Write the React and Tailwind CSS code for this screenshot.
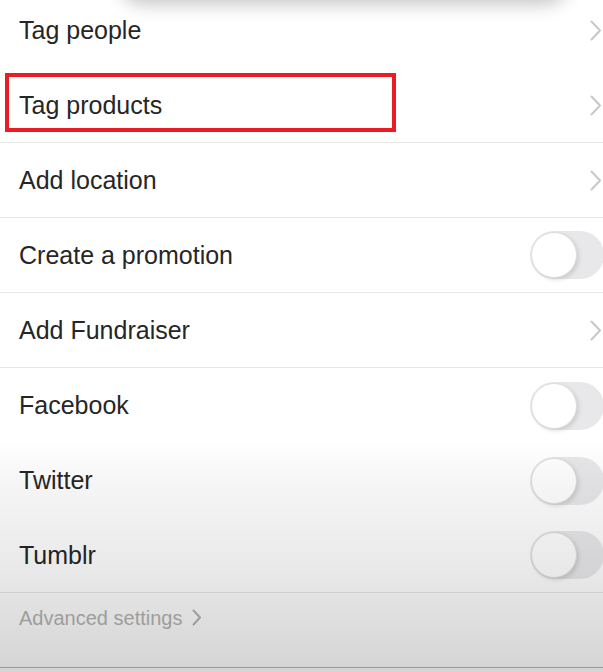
import React from "react";

const rows = [
  { label: "Tag people", kind: "link", first: true, noBorder: true },
  { label: "Tag products", kind: "link", marked: true },
  { label: "Add location", kind: "link" },
  { label: "Create a promotion", kind: "toggle" },
  { label: "Add Fundraiser", kind: "link" },
  { label: "Facebook", kind: "toggle", noBorder: true },
  { label: "Twitter", kind: "toggle", noBorder: true },
  { label: "Tumblr", kind: "toggle" },
];

function Chevron({ className }) {
  return (
    <svg width="12" height="21" viewBox="0 0 12 21" fill="none" className={className}>
      <path d="M1.5 1.5 L10 10.5 L1.5 19.5" stroke="#c8c8cc" strokeWidth="2" strokeLinecap="round" strokeLinejoin="round" />
    </svg>
  );
}

function Toggle() {
  return (
    <div className="w-[74px] h-[48px] -mr-[1px] rounded-full bg-[#e8e8ea] p-[1px] flex items-center">
      <div className="w-[46px] h-[46px] rounded-full bg-white border border-[#dedede] shadow-[2px_2px_4px_rgba(0,0,0,0.12)]" />
    </div>
  );
}

function Row({ label, kind, first, noBorder, marked }) {
  return (
    <div
      className={`relative flex items-center justify-between pl-[19px] h-[75px] ${
        first ? "-mt-[7px]" : ""
      } ${noBorder ? "" : "border-b border-[#e6e6e6]"}`}
    >
      {marked && (
        <div className="absolute left-[5px] top-[5px] w-[391px] h-[59px] border-[4px] border-[#ec1c24]" />
      )}
      <span className="text-[25px] text-[#262626] leading-none">{label}</span>
      {kind === "link" ? <Chevron className="mr-[1px]" /> : <Toggle />}
    </div>
  );
}

export default function App() {
  return (
    <div
      className="relative w-[603px] h-[672px] overflow-hidden bg-white"
      style={{ fontFamily: '"Liberation Sans", Arial, sans-serif' }}
    >
      {/* shadow of the sheet handle above the list */}
      <div className="absolute left-[120px] right-[35px] -top-[46px] h-[46px] rounded-full bg-white shadow-[0_4px_18px_rgba(0,0,0,0.24)]" />

      <div className="flex flex-col">
        {rows.map((r) => (
          <Row key={r.label} {...r} />
        ))}
        <div className="h-[49px] flex items-center pl-[19px] gap-[10px]">
          <span className="text-[20px] text-[#b4b4b4] leading-none">Advanced settings</span>
          <svg width="10" height="17" viewBox="0 0 10 17" fill="none">
            <path d="M1.5 1.5 L8 8.5 L1.5 15.5" stroke="#b4b4b4" strokeWidth="2" strokeLinecap="round" strokeLinejoin="round" />
          </svg>
        </div>
        <div className="h-[26px] border-b border-[#b8b8b8]" />
      </div>

      {/* dim fade over the lower part */}
      <div className="pointer-events-none absolute inset-0 bg-[linear-gradient(to_bottom,rgba(0,0,0,0)_0px,rgba(0,0,0,0)_440px,rgba(0,0,0,0.04)_485px,rgba(0,0,0,0.085)_570px,rgba(0,0,0,0.12)_610px,rgba(0,0,0,0.165)_668px)]" />
    </div>
  );
}
